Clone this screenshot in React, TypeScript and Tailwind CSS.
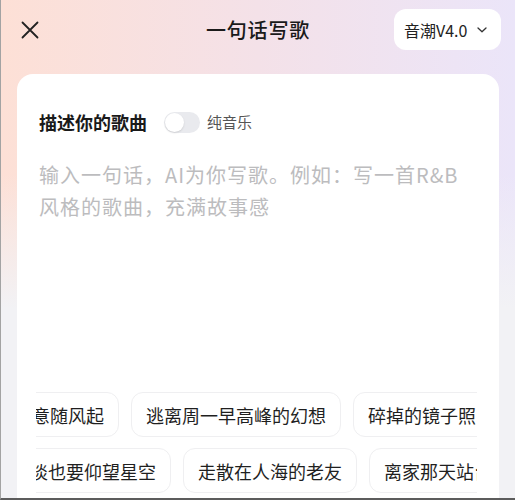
import React from "react";

const font = { fontFamily: '"Noto Sans CJK SC", "Noto Sans", sans-serif' };

function Chip({ text }: { text: string }) {
  return (
    <div className="shrink-0 h-[45px] flex items-center px-[14px] rounded-[12px] border border-[#efeff1] bg-white text-[18px] leading-[24px] text-[#1f1f1f] whitespace-nowrap">
      {text}
    </div>
  );
}

export default function App() {
  return (
    <div
      style={font}
      className="w-[515px] h-[500px] overflow-hidden flex flex-col border-l border-b-2 border-l-[#a3a3a3] border-b-[#5c5c5c] bg-[linear-gradient(to_bottom,rgba(243,243,246,0)_0%,rgba(243,243,246,0)_35%,#f2f2f5_62%),linear-gradient(to_right,#fde0d6,#f4e1e8_50%,#ebe5f9)]"
    >
      <header className="h-[59px] shrink-0 flex items-center justify-between pl-[19px] pr-[14px] relative">
        <svg width="20" height="20" viewBox="0 0 20 20" className="text-[#222]">
          <path d="M2.5 2.5 L17.5 17.5 M17.5 2.5 L2.5 17.5" stroke="currentColor" strokeWidth="1.8" strokeLinecap="round" fill="none" />
        </svg>
        <div className="absolute left-0 right-0 top-0 h-[59px] flex items-center justify-center pointer-events-none">
          <span className="text-[20px] font-medium text-[#1a1a1a] tracking-[0.8px]">一句话写歌</span>
        </div>
        <div className="h-[41px] w-[107px] bg-white rounded-[12px] flex items-center pl-[10px] gap-[10px]">
          <span className="text-[16px] text-[#222]">音潮V4.0</span>
          <svg width="10" height="6" viewBox="0 0 10 6">
            <path d="M1 1 L5 4.8 L9 1" stroke="#333" strokeWidth="1.3" fill="none" strokeLinecap="round" strokeLinejoin="round" />
          </svg>
        </div>
      </header>

      <main className="mt-[15px] mx-[16px] flex-1 bg-white rounded-t-[16px] pt-[36px]">
        <div className="flex items-center pl-[22px] h-[24px]">
          <span className="text-[18px] font-semibold text-[#1a1a1a] leading-[24px]">描述你的歌曲</span>
          <div className="ml-[17px] w-[36px] h-[21px] rounded-full bg-[#e9eaee] relative">
            <div className="absolute left-[1px] top-[1px] w-[19px] h-[19px] rounded-full bg-white shadow-[0_1px_2px_rgba(0,0,0,0.12)]" />
          </div>
          <span className="ml-[7px] text-[15px] text-[#555]">纯音乐</span>
        </div>

        <div className="mt-[25px] pl-[22px] h-[233px] text-[20px] leading-[32px] tracking-[1px] text-[#bcbcbe]">
          输入一句话，AI为你写歌。例如：写一首R&amp;B
          <br />
          风格的歌曲，充满故事感
        </div>

        <div className="ml-[19px] mr-[22px] overflow-hidden flex flex-col gap-[11px]">
          <div className="flex gap-[12px] ml-[-37px]">
            <Chip text="心意随风起" />
            <Chip text="逃离周一早高峰的幻想" />
            <Chip text="碎掉的镜子照出新的我" />
          </div>
          <div className="flex gap-[12px] ml-[-75px]">
            <Chip text="即使平淡也要仰望星空" />
            <Chip text="走散在人海的老友" />
            <Chip text="离家那天站台的风" />
          </div>
        </div>
      </main>
    </div>
  );
}
